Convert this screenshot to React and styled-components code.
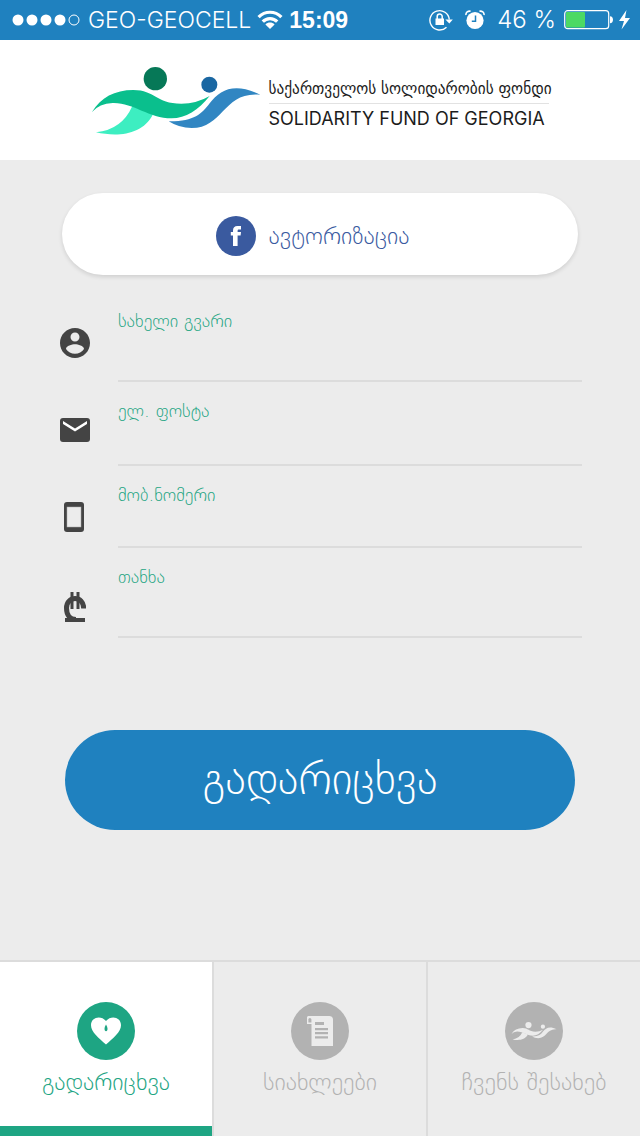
import React, { useState } from 'react';
import styled, { createGlobalStyle } from 'styled-components';

const fields = [
  { id: 'name', label: 'სახელი გვარი', type: 'text', height: 90, bottom: 24, icon: PersonIcon },
  { id: 'email', label: 'ელ. ფოსტა', type: 'email', height: 84, bottom: 24, icon: MailIcon },
  { id: 'phone', label: 'მობ.ნომერი', type: 'tel', height: 82, bottom: 16, icon: PhoneIcon },
  { id: 'amount', label: 'თანხა', type: 'text', height: 90, bottom: 16, icon: LariIcon },
];

const tabs = [
  { id: 'transfer', label: 'გადარიცხვა', icon: HeartIcon },
  { id: 'news', label: 'სიახლეები', icon: NewsIcon },
  { id: 'about', label: 'ჩვენს შესახებ', icon: PeopleIcon },
];

export default function App() {
  const [active, setActive] = useState('transfer');

  return (
    <Page>
      <GlobalStyle />
      <StatusBar>
        <StatusGroup $gap={6}>
          <SignalIcon />
          <Carrier>GEO-GEOCELL</Carrier>
          <WifiIcon />
          <Clock>15:09</Clock>
        </StatusGroup>
        <StatusGroup $gap={8}>
          <StatusGroup $gap={12}>
            <LockIcon />
            <AlarmIcon />
            <Percent>46 %</Percent>
          </StatusGroup>
          <BatteryIcon />
        </StatusGroup>
      </StatusBar>
      <Header>
        <Logo />
        <Brand>
          <BrandGeorgian>საქართველოს სოლიდარობის ფონდი</BrandGeorgian>
          <BrandEnglish>SOLIDARITY FUND OF GEORGIA</BrandEnglish>
        </Brand>
      </Header>
      <Form onSubmit={e => e.preventDefault()}>
        <FacebookButton type="button">
          <FacebookIcon />
          ავტორიზაცია
        </FacebookButton>
        <Fields>
          {fields.map(({ id, label, type, height, bottom, icon: Icon }) => (
            <Row key={id} $height={height}>
              <IconCell $bottom={bottom}>
                <Icon />
              </IconCell>
              <Field>
                <Label htmlFor={id}>{label}</Label>
                <Input id={id} type={type} />
              </Field>
            </Row>
          ))}
        </Fields>
        <SubmitButton type="submit">გადარიცხვა</SubmitButton>
      </Form>
      <TabBar>
        {tabs.map(({ id, label, icon: Icon }) => (
          <Tab key={id} type="button" $active={id === active} onClick={() => setActive(id)}>
            <TabCircle>
              <Icon />
            </TabCircle>
            {label}
          </Tab>
        ))}
      </TabBar>
    </Page>
  );
}

function SignalIcon() {
  return (
    <svg width="68" height="14" viewBox="0 0 68 14" fill="#fff">
      <circle cx="6" cy="7" r="5.5" />
      <circle cx="20" cy="7" r="5.5" />
      <circle cx="34" cy="7" r="5.5" />
      <circle cx="48" cy="7" r="5.5" />
      <circle cx="62" cy="7" r="5" fill="none" stroke="#fff" />
    </svg>
  );
}

function WifiIcon() {
  return (
    <svg width="26" height="20" viewBox="0 0 26 20" fill="none" stroke="#fff" strokeWidth="3.2">
      <path d="M1.600 7.200C8 .6 18 .6 24.400 7.200" />
      <path d="M5.800 11.700c4-4.200 10.400-4.200 14.400 0" />
      <path d="M13 19l-4.600-4.600c2.600-2.400 6.600-2.400 9.200 0z" fill="#fff" stroke="none" />
    </svg>
  );
}

function LockIcon() {
  return (
    <svg width="24" height="22" viewBox="0 0 24 22" fill="none" stroke="#fff">
      <path d="M17.500 18.200A9.700 9.700 0 1 1 20.300 10.500" strokeWidth="1.400" />
      <path d="M16.400 10.500h7.400L20.300 14.500z" fill="#fff" stroke="none" />
      <rect x="6.500" y="9.500" width="8.500" height="6.500" fill="#fff" stroke="none" />
      <path d="M8.200 10V7.600a2.500 2.500 0 0 1 5 0V10" strokeWidth="1.500" />
    </svg>
  );
}

function AlarmIcon() {
  return (
    <svg width="20" height="20" viewBox="0 0 20 20" fill="#fff">
      <circle cx="10" cy="10.500" r="8.600" />
      <path d="M1 5C.6 2.500 3 .6 5.600 1.200M19 5C19.400 2.500 17 .6 14.400 1.200" stroke="#fff" strokeWidth="1.600" fill="none" />
      <path d="M10.500 5.500v5.700H6.800" fill="none" stroke="#1f81bf" strokeWidth="1.500" />
    </svg>
  );
}

function BatteryIcon() {
  return (
    <svg width="68" height="22" viewBox="0 0 68 22">
      <rect x=".7" y="1.700" width="44" height="18" rx="3" fill="none" stroke="#fff" strokeWidth="1.200" />
      <rect x="2" y="3" width="19" height="15.400" rx="1" fill="#4cd964" />
      <path d="M46 7.200c4 0 4 7 0 7z" fill="#fff" />
      <path d="M62.500 1L55 12h5l-2.500 8.500L66 9h-5z" fill="#fff" />
    </svg>
  );
}

function Waves({ colors }) {
  const [dark, green, mint, navy, blue] = colors;
  return (
    <>
      <circle cx="226" cy="71" r="35" fill={dark} />
      <circle cx="388" cy="89" r="24" fill={navy} />
      <path d="M157 153Q126 224 48 232C110 246 187 242 219 178Z" fill={mint} />
      <path d="M36 171C62 128 104 105 160 105C226 105 226 146 304 146Q350 146 389 123C355 165 317 190 275 190C205 190 160 142 98 144Q58 146 36 171Z" fill={green} />
      <path d="M266 199C342 200 365 177 389 145C420 104 463 81 541 119C430 108 431 219 335 219Q297 219 266 199Z" fill={blue} />
    </>
  );
}

function Logo() {
  return (
    <svg width="172" height="72" viewBox="30 30 516 216">
      <Waves colors={['#067857', '#0abf8d', '#3deec1', '#1a67a2', '#3186c2']} />
    </svg>
  );
}

function PeopleIcon() {
  return (
    <svg width="46" height="20" viewBox="30 28 516 220">
      <Waves colors={['#ececec', '#ececec', '#ececec', '#ececec', '#ececec']} />
    </svg>
  );
}

function FacebookIcon() {
  return (
    <svg width="40" height="40" viewBox="0 0 40 40">
      <circle cx="20" cy="20" r="20" fill="#3a5a9f" />
      <path d="M17 30V19.500h-2.200v-3.600H17v-1.400c0-3 1.500-4.500 4.500-4.500H25v3.500h-2c-1 0-1.400.4-1.400 1.400v1H25l-.4 3.600h-3V30z" fill="#fff" />
    </svg>
  );
}

function PersonIcon() {
  return (
    <svg width="30" height="30" viewBox="2 2 20 20" fill="#444">
      <path d="M12 2C6.480 2 2 6.480 2 12s4.480 10 10 10 10-4.480 10-10S17.520 2 12 2zm0 3c1.660 0 3 1.340 3 3s-1.340 3-3 3-3-1.340-3-3 1.340-3 3-3zm0 14.200c-2.500 0-4.710-1.280-6-3.220.03-1.990 4-3.080 6-3.080 1.990 0 5.970 1.090 6 3.080-1.290 1.940-3.500 3.220-6 3.220z" />
    </svg>
  );
}

function MailIcon() {
  return (
    <svg width="30" height="24" viewBox="0 0 30 24">
      <rect width="30" height="24" rx="3" fill="#444" />
      <path d="M3 3l12 7.500L27 3v3l-12 7.500L3 6z" fill="#fff" />
    </svg>
  );
}

function PhoneIcon() {
  return (
    <svg width="22" height="30" viewBox="0 0 22 30">
      <rect width="20" height="30" rx="3" fill="#444" />
      <rect x="3" y="5" width="14" height="20" fill="#ececec" stroke="#aaa" strokeWidth=".5" />
    </svg>
  );
}

function LariIcon() {
  return (
    <svg width="22" height="30" viewBox="0 0 22 30">
      <path d="M19.700 16.500C19.700 3 2.500 3.500 2.500 16c0 7 3.500 11.500 9.500 11.500" fill="none" stroke="#444" strokeWidth="5" />
      <path d="M1 26h20v4H1zM6.500 0h3v17h-3zM12.500 0h3v17h-3z" fill="#444" />
    </svg>
  );
}

function HeartIcon() {
  return (
    <svg width="30" height="28" viewBox="0 0 30 28">
      <path d="M15 27.500C8 21 0 15 0 8.200 0 .5 9.500-2.200 15 4 20.500-2.200 30 .5 30 8.200 30 15 22 21 15 27.500z" fill="#fff" />
      <path d="M15 7.500c2 3 2 6.700 0 6.700s-2-3.700 0-6.700z" fill="#1ea583" />
    </svg>
  );
}

function NewsIcon() {
  return (
    <svg width="26" height="30" viewBox="0 0 26 30">
      <path d="M1 0h21.500c2 0 3.500 1.500 3.500 3.500V30H4.500V8H0V1z" fill="#ececec" />
      <path d="M1.400 6.600V3.400q0-1.500 1.500-1.500t1.500 1.500v3.200z" fill="#b2b2b2" />
      <path d="M8 6h9v3H8zM8 12h13v2.200H8zM8 16h13v2.200H8zM8 20.200h13v2.400H8z" fill="#b2b2b2" />
    </svg>
  );
}

const GlobalStyle = createGlobalStyle`
  * {
    box-sizing: border-box;
  }
  body {
    margin: 0;
    background-color: #ececec;
    font-family: 'DejaVu Sans', sans-serif;
    font-weight: 200;
  }
  button,
  input {
    font: inherit;
    border: 0;
    padding: 0;
  }
  svg {
    display: block;
    flex-shrink: 0;
  }
`;

const Page = styled.div`
  display: flex;
  flex-direction: column;
  min-height: 100vh;
`;

const StatusBar = styled.div`
  display: flex;
  align-items: center;
  justify-content: space-between;
  height: 40px;
  padding: 0 8px 0 12px;
  background-color: #1f81bf;
  color: #fff;
  font-family: Inter, 'Liberation Sans', sans-serif;
  line-height: 40px;
`;

const StatusGroup = styled.div`
  display: flex;
  align-items: center;
  gap: ${({ $gap }) => $gap}px;
`;

const Carrier = styled.span`
  margin-left: 2px;
  font-size: 23px;
  font-weight: 300;
`;

const Clock = styled.span`
  font-family: 'Liberation Sans', sans-serif;
  font-size: 23px;
  font-weight: 700;
`;

const Percent = styled.span`
  font-size: 24px;
  font-weight: 300;
`;

const Header = styled.header`
  display: flex;
  align-items: center;
  justify-content: center;
  gap: 7px;
  height: 120px;
  padding: 2px 2px 0 0;
  background-color: #fff;
`;

const Brand = styled.div`
  display: flex;
  flex-direction: column;
  width: 280px;
  padding-top: 6px;
  color: #1c1c1c;
  white-space: nowrap;
`;

const BrandGeorgian = styled.span`
  padding-bottom: 4px;
  border-bottom: 1px solid #e2e2e2;
  font-family: 'DejaVu Sans Condensed', 'DejaVu Sans', sans-serif;
  font-size: 17px;
  font-weight: 400;
  line-height: 22px;
`;

const BrandEnglish = styled.span`
  padding-top: 3px;
  font-family: Inter, Roboto, sans-serif;
  font-size: 18px;
  font-weight: 400;
  line-height: 24px;
`;

const Form = styled.form`
  display: flex;
  flex-direction: column;
  padding: 33px 62px 40px;
`;

const FacebookButton = styled.button`
  display: flex;
  align-items: center;
  justify-content: center;
  gap: 12px;
  height: 82px;
  padding-right: 14px;
  padding-top: 4px;
  border-radius: 41px;
  background-color: #fff;
  box-shadow: 0 2px 4px rgba(0, 0, 0, 0.12);
  color: #3a5a9f;
  font-size: 24px;
`;

const Fields = styled.div`
  margin: 0 -4px 0 -2px;
  padding: 17px 0 92px;
`;

const Row = styled.div`
  display: flex;
  align-items: flex-end;
  height: ${({ $height }) => $height}px;
`;

const IconCell = styled.div`
  display: flex;
  justify-content: center;
  width: 58px;
  padding: 0 28px ${({ $bottom }) => $bottom}px 0;
`;

const Field = styled.div`
  display: flex;
  flex: 1;
  flex-direction: column;
  align-self: stretch;
  padding-top: 18px;
`;

const Label = styled.label`
  color: #1ea583;
  font-size: 18px;
  line-height: 22px;
`;

const Input = styled.input`
  flex: 1;
  width: 100%;
  min-height: 0;
  border-bottom: 2px solid #dcdcdc;
  outline: 0;
  background-color: transparent;
  color: #444;
  font-size: 20px;
`;

const SubmitButton = styled.button`
  height: 100px;
  margin: 0 3px;
  padding-bottom: 4px;
  border-radius: 50px;
  background-color: #1f81bf;
  color: #fff;
  font-size: 44px;
`;

const TabBar = styled.nav`
  display: grid;
  grid-template-columns: repeat(3, 1fr);
  gap: 2px;
  height: 176px;
  margin-top: auto;
  border-top: 2px solid #dcdcdc;
  background-color: #dcdcdc;
`;

const Tab = styled.button`
  display: flex;
  flex-direction: column;
  align-items: center;
  gap: 8px;
  padding-top: 40px;
  background-color: ${({ $active }) => ($active ? '#fff' : '#ececec')};
  box-shadow: ${({ $active }) => ($active ? 'inset 0 -10px #1ea583' : 'none')};
  color: ${({ $active }) => ($active ? '#1ea583' : '#b2b2b2')};
  font-size: 24px;
  line-height: 28px;
  white-space: nowrap;
`;

const TabCircle = styled.span`
  display: flex;
  align-items: center;
  justify-content: center;
  width: 58px;
  height: 58px;
  border-radius: 50%;
  background-color: currentColor;
`;
